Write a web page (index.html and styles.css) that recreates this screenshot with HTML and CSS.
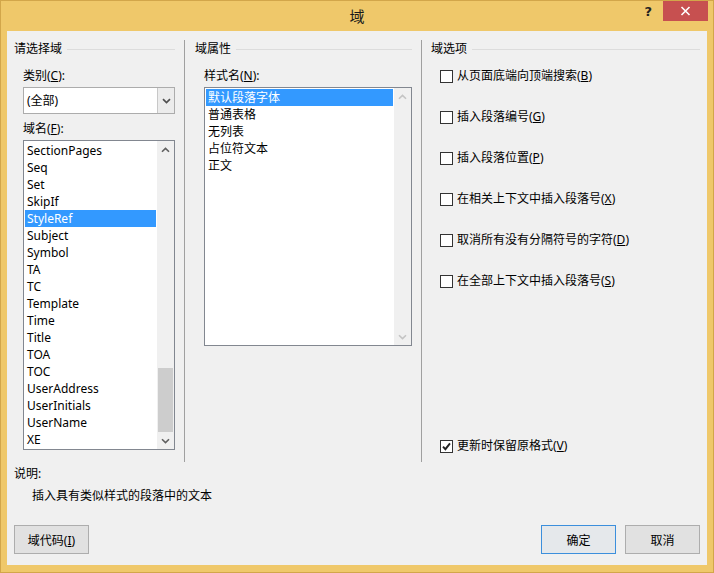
FILE: index.html
```html
<!DOCTYPE html>
<html lang="zh-CN">
<head>
<meta charset="utf-8">
<title>域</title>
<link rel="stylesheet" href="styles.css">
</head>
<body>
<div class="window">
  <div class="titlebar">
    <div class="tb-side"></div>
    <div class="title">域</div>
    <div class="tb-side tb-right">
      <span class="help">?</span>
      <span class="close"><svg width="11" height="10" viewBox="0 0 11 10"><path d="M1.5 1L9.5 9M9.5 1L1.5 9" stroke="#fff" stroke-width="1.6" fill="none"/></svg></span>
    </div>
  </div>
  <div class="content">
    <div class="panels">
      <section class="panel panel-left">
        <div class="group-head"><span>请选择域</span><i class="rule"></i></div>
        <div class="field-label">类别(<u>C</u>):</div>
        <div class="combo">
          <span class="combo-text">(全部)</span>
          <span class="combo-btn"><svg width="9" height="6" viewBox="0 0 9 6"><path d="M1 1.2L4.5 4.6L8 1.2" fill="none" stroke="#505050" stroke-width="1.7"/></svg></span>
        </div>
        <div class="field-label">域名(<u>F</u>):</div>
        <div class="listbox list-names">
          <ul class="items">
            <li>SectionPages</li>
            <li>Seq</li>
            <li>Set</li>
            <li>SkipIf</li>
            <li class="selected">StyleRef</li>
            <li>Subject</li>
            <li>Symbol</li>
            <li>TA</li>
            <li>TC</li>
            <li>Template</li>
            <li>Time</li>
            <li>Title</li>
            <li>TOA</li>
            <li>TOC</li>
            <li>UserAddress</li>
            <li>UserInitials</li>
            <li>UserName</li>
            <li>XE</li>
          </ul>
          <div class="vscroll">
            <span class="arrow"><svg width="9" height="6" viewBox="0 0 9 6"><path d="M1 4.8L4.5 1.4L8 4.8" fill="none" stroke="#606060" stroke-width="1.6"/></svg></span>
            <div class="track"><div class="thumb"></div></div>
            <span class="arrow"><svg width="9" height="6" viewBox="0 0 9 6"><path d="M1 1.2L4.5 4.6L8 1.2" fill="none" stroke="#606060" stroke-width="1.6"/></svg></span>
          </div>
        </div>
      </section>

      <section class="panel panel-mid">
        <div class="group-head"><span>域属性</span><i class="rule"></i></div>
        <div class="field-label">样式名(<u>N</u>):</div>
        <div class="listbox list-styles">
          <ul class="items">
            <li class="selected">默认段落字体</li>
            <li>普通表格</li>
            <li>无列表</li>
            <li>占位符文本</li>
            <li>正文</li>
          </ul>
          <div class="vscroll disabled">
            <span class="arrow"><svg width="9" height="6" viewBox="0 0 9 6"><path d="M1 4.8L4.5 1.4L8 4.8" fill="none" stroke="#c4c4c4" stroke-width="1.6"/></svg></span>
            <div class="track"></div>
            <span class="arrow"><svg width="9" height="6" viewBox="0 0 9 6"><path d="M1 1.2L4.5 4.6L8 1.2" fill="none" stroke="#c4c4c4" stroke-width="1.6"/></svg></span>
          </div>
        </div>
      </section>

      <section class="panel panel-right">
        <div class="group-head"><span>域选项</span><i class="rule"></i></div>
        <label class="check"><span class="box"></span>从页面底端向顶端搜索(<u>B</u>)</label>
        <label class="check"><span class="box"></span>插入段落编号(<u>G</u>)</label>
        <label class="check"><span class="box"></span>插入段落位置(<u>P</u>)</label>
        <label class="check"><span class="box"></span>在相关上下文中插入段落号(<u>X</u>)</label>
        <label class="check"><span class="box"></span>取消所有没有分隔符号的字符(<u>D</u>)</label>
        <label class="check"><span class="box"></span>在全部上下文中插入段落号(<u>S</u>)</label>
        <label class="check check-last"><span class="box"><svg width="11" height="11" viewBox="0 0 11 11"><path d="M2 5.6L4.4 8.2L9 2.4" fill="none" stroke="#222" stroke-width="1.9"/></svg></span>更新时保留原格式(<u>V</u>)</label>
      </section>
    </div>

    <div class="desc-label">说明:</div>
    <div class="desc-text">插入具有类似样式的段落中的文本</div>

    <div class="buttons">
      <button class="btn">域代码(<u>I</u>)</button>
      <span class="spacer"></span>
      <button class="btn btn-default">确定</button>
      <button class="btn">取消</button>
    </div>
  </div>
</div>
</body>
</html>
```

FILE: styles.css
```css
* { box-sizing: border-box; }

html, body {
  margin: 0;
  padding: 0;
  width: 714px;
  height: 573px;
  overflow: hidden;
}

body {
  font-family: "Noto Sans", "Noto Sans CJK SC", sans-serif;
  font-size: 12px;
  color: #000;
}

.window {
  width: 714px;
  height: 573px;
  background: #efc86a;
  border: 1px solid #d2a64a;
  display: flex;
  flex-direction: column;
}

/* title bar */
.titlebar {
  height: 30px;
  display: grid;
  grid-template-columns: 1fr auto 1fr;
  align-items: start;
}
.title {
  font-size: 15px;
  line-height: 20px;
  padding-top: 5px;
  color: #1a1a1a;
}
.tb-right {
  display: flex;
  justify-content: flex-end;
  align-items: flex-start;
  padding-right: 5px;
}
.help {
  font-family: "DejaVu Sans", sans-serif;
  font-weight: bold;
  font-size: 13px;
  line-height: 20px;
  color: #222;
  margin-right: 11px;
  margin-top: 1px;
}
.close {
  width: 45px;
  height: 20px;
  background: #c75050;
  display: flex;
  align-items: center;
  justify-content: center;
}

/* client area */
.content {
  flex: 1;
  margin: 0 6px 7px 6px;
  background: #f0f0f0;
  display: flex;
  flex-direction: column;
}

.panels {
  margin-top: 9px;
  height: 422px;
  display: flex;
}

.panel {
  display: flex;
  flex-direction: column;
  height: 100%;
}
.panel-left {
  width: 178px;
  padding: 0 9px 0 7px;
  border-right: 1px solid #a0a0a0;
}
.panel-mid {
  width: 237px;
  padding: 0 9px 0 10px;
  border-right: 1px solid #a0a0a0;
}
.panel-right {
  flex: 1;
  padding: 0 7px 7px 9px;
}

.group-head {
  height: 18px;
  line-height: 18px;
  display: flex;
  align-items: center;
}
.rule {
  flex: 1;
  height: 1px;
  background: #dcdcdc;
  margin-left: 5px;
}

.field-label {
  margin: 9px 0 0 9px;
  line-height: 18px;
}
.combo + .field-label { margin-top: 6px; }

.combo {
  margin: 2px 0 0 9px;
  height: 27px;
  border: 1px solid #acacac;
  background: #fff;
  display: flex;
}
.combo-text {
  flex: 1;
  line-height: 25px;
  padding-left: 3px;
}
.combo-btn {
  width: 17px;
  background: #ececec;
  border-left: 1px solid #c8c8c8;
  display: flex;
  align-items: center;
  justify-content: center;
}

.listbox {
  margin: 2px 0 0 9px;
  border: 1px solid #828790;
  background: #fff;
  display: flex;
}
.list-names { height: 310px; }
.list-styles { height: 259px; }

.items {
  list-style: none;
  margin: 0;
  padding: 1px;
  flex: 1;
}
.items li {
  height: 17px;
  line-height: 17px;
  padding-left: 2px;
  white-space: nowrap;
}
.items li.selected {
  background: #3399ff;
  color: #fff;
}

.vscroll {
  width: 17px;
  background: #f0f0f0;
  display: flex;
  flex-direction: column;
}
.vscroll .arrow {
  height: 17px;
  display: flex;
  align-items: center;
  justify-content: center;
}
.vscroll .track {
  flex: 1;
  display: flex;
  flex-direction: column;
  justify-content: flex-end;
  padding: 0 1px;
}
.thumb {
  height: 64px;
  background: #cdcdcd;
}

/* checkboxes */
.check {
  display: flex;
  align-items: center;
  line-height: 18px;
  margin: 23px 0 0 9px;
}
.group-head + .check { margin-top: 9px; }
.check-last { margin-top: auto; }
.check .box {
  width: 13px;
  height: 13px;
  border: 1px solid #333;
  background: #fff;
  margin-right: 4px;
  display: flex;
  align-items: center;
  justify-content: center;
}

/* description */
.desc-label {
  margin: 3px 0 0 7px;
  line-height: 18px;
}
.desc-text {
  margin: 4px 0 0 25px;
  line-height: 18px;
}

/* buttons */
.buttons {
  margin-top: 20px;
  padding: 0 7px;
  display: flex;
  gap: 9px;
}
.spacer { flex: 1; }
.btn {
  width: 75px;
  height: 29px;
  font: inherit;
  color: #000;
  background: #e1e1e1;
  border: 1px solid #adadad;
  padding: 0;
}
.btn-default {
  border-color: #3c8fdc;
  background: #e5e8eb;
}
```
